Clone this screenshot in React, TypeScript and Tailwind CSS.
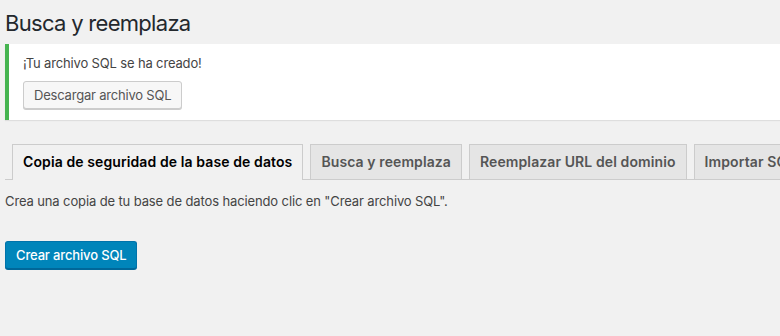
import React from "react";

const tabs = [
  "Copia de seguridad de la base de datos",
  "Busca y reemplaza",
  "Reemplazar URL del dominio",
  "Importar SQL",
];

export default function App() {
  return (
    <div
      className="w-[780px] h-[336px] overflow-hidden bg-[#f1f1f1] pl-[5px] text-[#444]"
      style={{ fontFamily: "Inter, Roboto, 'Noto Sans', sans-serif" }}
    >
      <h1 className="pt-[9px] pb-[4px] text-[22px] leading-[29px] font-normal tracking-[-0.7px] text-[#23282d]">
        Busca y reemplaza
      </h1>
      <div className="mt-[2px] border-l-4 border-[#46b450] bg-white pl-[14px] pt-[10px] pb-[11px] shadow-[0_1px_1px_rgba(0,0,0,0.08)]">
        <p className="text-[13px] leading-[19px] tracking-[-0.15px] text-[#444]">¡Tu archivo SQL se ha creado!</p>
        <button className="mt-[8px] h-[28px] rounded-[3px] border border-[#ccc] bg-[#f7f7f7] px-[10px] pb-px text-[13px] leading-[26px] tracking-[-0.2px] text-[#555] shadow-[0_1px_0_#ccc]">
          Descargar archivo SQL
        </button>
      </div>
      <div className="mt-[24px] flex whitespace-nowrap border-b border-[#ccc] pl-[7px]">
        {tabs.map((t, i) => (
          <div
            key={t}
            className={
              i === 0
                ? "-mb-px mr-[7px] shrink-0 border border-b-0 border-[#ccc] bg-[#f1f1f1] px-[10px] pt-[5px] pb-[6px] text-[14px] font-semibold leading-[24px] tracking-[0.1px] text-black"
                : "mr-[7px] shrink-0 border border-b-0 border-[#ccc] bg-[#e5e5e5] px-[10px] py-[5px] text-[14px] font-semibold leading-[24px] tracking-[0.1px] text-[#555]"
            }
          >
            {t}
          </div>
        ))}
      </div>
      <p className="mt-[12px] text-[13px] leading-[19px] tracking-[-0.12px] text-[#444]">
        Crea una copia de tu base de datos haciendo clic en "Crear archivo SQL".
      </p>
      <button className="mt-[30px] h-[28px] rounded-[3px] border border-[#0073aa] border-b-[#006799] bg-[#0085ba] px-[10px] pb-px text-[13px] font-medium leading-[26px] tracking-[-0.15px] text-white shadow-[0_1px_0_#006799]">
        Crear archivo SQL
      </button>
    </div>
  );
}
